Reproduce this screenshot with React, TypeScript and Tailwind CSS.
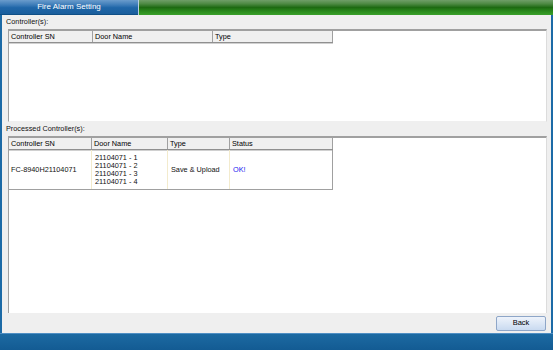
import React from "react";

const font = { fontFamily: '"Liberation Sans", Arial, sans-serif' };

const HeaderCell = ({ w, children }: { w: string; children: React.ReactNode }) => (
    <div
        className={`${w} h-full flex items-center pl-[2px] bg-[#f0f0f0] border-r border-[#a0a0a0] text-[#000] shrink-0`}
    >
        {children}
    </div>
);

const App = () => {
    return (
        <div className="w-[553px] h-[350px] flex flex-col text-[7.3px] leading-[8px]" style={font}>
            {/* title bar */}
            <div className="h-[15px] flex shrink-0">
                <div className="w-[138px] h-full flex items-center justify-center text-white text-[8px] bg-[linear-gradient(#6a9ccc_0%,#3d7cb8_35%,#1f66a8_55%,#1a5e9c_100%)] border-b border-[#0f4f86]">
                    Fire Alarm Setting
                </div>
                <div className="w-[1px] h-full bg-[#b8cfe0]" />
                <div className="flex-1 h-full bg-[linear-gradient(#6f9e68_0%,#4e8a44_25%,#1d6a12_50%,#2a8a1c_75%,#3aa02a_100%)]" />
            </div>

            {/* body */}
            <div className="flex-1 flex flex-col bg-[#efefef] border-l-2 border-r-2 border-[#1c6aa6] pl-[6px] pr-[4px]">
                <div className="h-[14px] flex items-center -ml-[2px] text-[#111]">Controller(s):</div>

                <div className="h-[93px] bg-white border-t-2 border-l border-[#a0a0a0] border-r border-r-[#dcdcdc] border-b border-b-[#efefef]">
                    <div className="w-[324px] h-[12px] flex border-b border-[#909090] shadow-[0_1px_0_#d0d0d0]">
                        <HeaderCell w="w-[84px]">Controller SN</HeaderCell>
                        <HeaderCell w="w-[120px]">Door Name</HeaderCell>
                        <HeaderCell w="w-[120px]">Type</HeaderCell>
                    </div>
                </div>

                <div className="h-[14px] flex items-center -ml-[2px] text-[#111]">Processed Controller(s):</div>

                <div className="h-[177px] bg-white border-t-2 border-l border-[#a0a0a0] border-r border-r-[#dcdcdc]">
                    <div className="w-[324px] h-[12px] flex border-b border-[#909090] shadow-[0_1px_0_#d0d0d0]">
                        <HeaderCell w="w-[83px]">Controller SN</HeaderCell>
                        <HeaderCell w="w-[76px]">Door Name</HeaderCell>
                        <HeaderCell w="w-[62px]">Type</HeaderCell>
                        <HeaderCell w="w-[103px]">Status</HeaderCell>
                    </div>
                    <div className="w-[324px] h-[40px] flex border-b border-[#a0a0a0] border-r text-[#111]">
                        <div className="w-[83px] flex items-center pl-[2px] border-r border-[#f3ebcd]">
                            FC-8940H21104071
                        </div>
                        <div className="w-[76px] flex flex-col justify-center pl-[3px] border-r border-[#f3ebcd]">
                            <span>21104071 - 1</span>
                            <span>21104071 - 2</span>
                            <span>21104071 - 3</span>
                            <span>21104071 - 4</span>
                        </div>
                        <div className="w-[62px] flex items-center pl-[3px] border-r border-[#f3ebcd]">
                            Save &amp; Upload
                        </div>
                        <div className="flex-1 flex items-center pl-[3px] text-[#2020f0]">OK!</div>
                    </div>
                </div>

                <div className="flex-1 flex items-center justify-end pr-[1px]">
                    <button className="w-[50px] h-[15px] rounded-[2px] border border-[#8ea6c8] bg-[linear-gradient(#eef3fb_0%,#dce7f6_50%,#c9daf0_100%)] text-black text-[7.5px]">
                        Back
                    </button>
                </div>
            </div>

            {/* bottom bar */}
            <div className="h-[17px] shrink-0 border-t border-[#4f8fc4] bg-[linear-gradient(#1c6aa2,#135b93)]" />
        </div>
    );
};

export default App;
